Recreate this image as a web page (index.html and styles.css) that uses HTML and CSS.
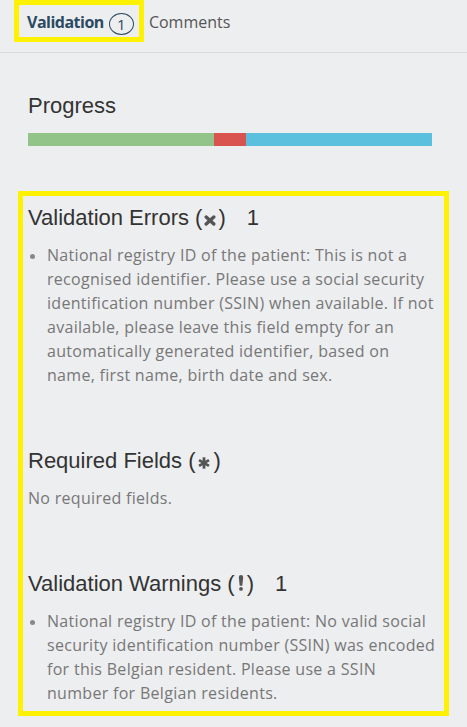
FILE: index.html
```html
<!DOCTYPE html>
<html lang="en">
<head>
<meta charset="utf-8">
<title>Validation</title>
<link rel="stylesheet" href="styles.css">
</head>
<body>
<div class="tabs">
  <div class="tab tab-active">Validation <span class="badge">1</span></div>
  <div class="tab tab-plain">Comments</div>
</div>
<div class="panel">
  <h2 class="progress-title">Progress</h2>
  <div class="bar">
    <div class="seg seg-ok" style="width:46%"></div>
    <div class="seg seg-err" style="width:8%"></div>
    <div class="seg seg-warn" style="width:46%"></div>
  </div>
  <section class="issues">
    <div class="group">
      <h2>Validation Errors (<svg class="ico ico-x" width="12" height="11" viewBox="0 0 12 11"><path d="M2.2 2 L9.8 9 M9.8 2 L2.2 9" stroke="#555" stroke-width="3.4" stroke-linecap="round" fill="none"/></svg>)<span class="count">1</span></h2>
      <ul class="list">
        <li><span class="txt">National registry ID of the patient: This is not a<br>recognised identifier. Please use a social security<br>identification number (SSIN) when available. If not<br>available, please leave this field empty for an<br>automatically generated identifier, based on<br>name, first name, birth date and sex.</span></li>
      </ul>
    </div>
    <div class="group">
      <h2>Required Fields (<svg class="ico ico-star" width="12" height="12" viewBox="0 0 12 12"><g stroke="#555" stroke-width="2.8" fill="none"><path d="M6 0.3 V11.7"/><path d="M1.06 3.15 L10.94 8.85"/><path d="M1.06 8.85 L10.94 3.15"/></g></svg>)</h2>
      <p class="note">No required fields.</p>
    </div>
    <div class="group">
      <h2>Validation Warnings (<svg class="ico ico-excl" width="6" height="16" viewBox="0 0 6 16"><path d="M0.8 2.2 A2.2 2.2 0 0 1 5.2 2.2 L4.3 10.8 H1.7 Z" fill="#555"/><circle cx="3" cy="13.9" r="1.9" fill="#555"/></svg>)<span class="count">1</span></h2>
      <ul class="list">
        <li><span class="txt">National registry ID of the patient: No valid social<br>security identification number (SSIN) was encoded<br>for this Belgian resident. Please use a SSIN<br>number for Belgian residents.</span></li>
      </ul>
    </div>
  </section>
</div>
</body>
</html>
```
FILE: styles.css
```css
* {
  box-sizing: border-box;
}

body {
  margin: 0;
  background: #edeef0;
  font-family: "Open Sans", Lato, sans-serif;
}

.tabs {
  display: flex;
  align-items: flex-start;
  height: 53px;
  border-bottom: 1px solid #d9dadc;
  padding-left: 14px;
}

.tab {
  display: flex;
  align-items: center;
  height: 42px;
  padding-top: 2px;
  font-size: 16px;
  line-height: 22px;
}

.tab-active {
  border: 5px solid #fff200;
  padding-left: 8px;
  padding-right: 5px;
  color: #2b4a62;
  font-weight: 700;
  letter-spacing: -0.5px;
  gap: 5px;
}

.badge {
  display: flex;
  align-items: center;
  justify-content: center;
  width: 25px;
  height: 22px;
  margin-top: 4px;
  border: 1px solid #2b4a62;
  border-radius: 50%;
  font-size: 15px;
  font-weight: 400;
  letter-spacing: 0;
}

.tab-plain {
  color: #555;
  padding-left: 5px;
}

.panel {
  padding: 0 35px 0 28px;
}

h2 {
  margin: 0;
  font-family: "Liberation Sans", Arial, sans-serif;
  font-size: 22px;
  line-height: 26px;
  font-weight: 400;
  color: #333;
}

.progress-title {
  margin-top: 40px;
}

.bar {
  display: flex;
  height: 13px;
  margin-top: 14px;
}

.seg-ok {
  background: #92c48a;
}

.seg-err {
  background: #d9534f;
}

.seg-warn {
  background: #5bc0de;
}

.issues {
  margin: 45px -17px 0 -10px;
  border: 5px solid #fff200;
  padding: 9px 12px 6px 5px;
}

.group + .group {
  margin-top: 61px;
}

.ico {
  vertical-align: -1px;
  margin: 0 2px;
}

.ico-star {
  margin: 0 4px 0 2px;
}

.ico-excl {
  vertical-align: 0;
  margin: 0 3px;
}

.count {
  margin-left: 21px;
}

.list {
  margin: 12px 0 0;
  padding: 0;
  list-style: none;
}

.list li {
  display: grid;
  grid-template-columns: 19px 1fr;
  font-size: 16px;
  line-height: 24px;
  letter-spacing: 0.3px;
  color: #777;
}

.list li::before {
  content: "";
  width: 5px;
  height: 5px;
  margin: 11px 0 0 2px;
  border-radius: 50%;
  background: #888;
}

.txt {
  white-space: nowrap;
}

.note {
  margin: 12px 0 0;
  font-size: 16px;
  line-height: 24px;
  letter-spacing: 0.3px;
  color: #777;
}
```
